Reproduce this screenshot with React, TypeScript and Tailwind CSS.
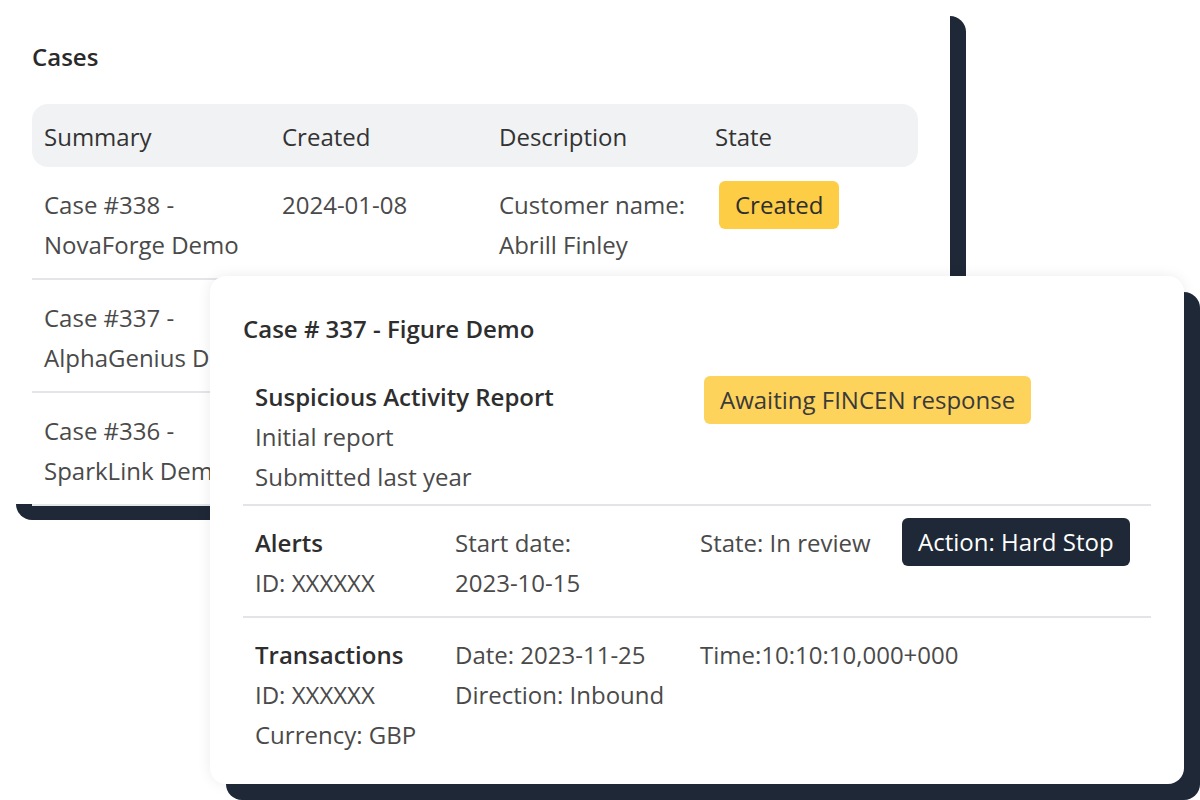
import React from "react";

const font = { fontFamily: '"Open Sans", "Noto Sans", sans-serif' };

function CasesCard() {
  const rows = [
    { s: ["Case #338 -", "NovaForge Demo"], c: "2024-01-08", d: ["Customer name:", "Abrill Finley"], badge: true },
    { s: ["Case #337 -", "AlphaGenius Demo"], c: "2024-01-07", d: ["Customer name:", "Jane Doe"], badge: false },
    { s: ["Case #336 -", "SparkLink Demo"], c: "2024-01-06", d: ["Customer name:", "John Smith"], badge: false },
  ];
  return (
    <div className="w-[950px] h-[504px] bg-white rounded-2xl shadow-[16px_16px_0_0_#1e2836] pl-8 pr-8 pt-[37px]">
      <div className="text-[24px] leading-10 font-semibold text-[#2a2a2a]">Cases</div>
      <div className="mt-[27px] w-[886px]">
        <div className="grid grid-cols-[238px_217px_216px_1fr] h-[63px] items-center bg-[#f1f2f4] rounded-2xl pl-[12px] pt-[2px] text-[24px] text-[#333]">
          <div>Summary</div>
          <div>Created</div>
          <div>Description</div>
          <div>State</div>
        </div>
        {rows.map((r, i) => (
          <div
            key={i}
            className="grid grid-cols-[238px_217px_216px_1fr] pl-[12px] pt-[18px] pb-[13px] border-b-2 border-[#e4e5e8] text-[24px] leading-10 text-[#4a4a4a]"
          >
            <div>
              <div>{r.s[0]}</div>
              <div className="whitespace-nowrap">{r.s[1]}</div>
            </div>
            <div>{r.c}</div>
            <div>
              <div>{r.d[0]}</div>
              <div>{r.d[1]}</div>
            </div>
            <div>
              {r.badge && (
                <div className="w-fit ml-1 -mt-[4px] h-12 px-4 py-1 rounded-md bg-[#fdcd45] text-[#2e2e2e]">Created</div>
              )}
            </div>
          </div>
        ))}
      </div>
    </div>
  );
}

function DetailCard() {
  return (
    <div className="absolute left-[210px] top-[276px] w-[974px] h-[508px] bg-white rounded-2xl shadow-[16px_16px_0_0_#1e2836,0_0_14px_rgba(0,0,0,0.08)] px-[33px] pt-[33px]">
      <div className="text-[24px] leading-10 font-semibold text-[#2e2e2e]">Case # 337 - Figure Demo</div>
      <div className="mt-[28px] grid grid-cols-[200px_245px_202px_1fr] pl-[12px] pb-[7px] border-b-2 border-[#e2e4e8] text-[24px] leading-10 text-[#4a4a4a]">
        <div className="col-span-2">
          <div className="font-semibold text-[#2e2e2e]">Suspicious Activity Report</div>
          <div>Initial report</div>
          <div>Submitted last year</div>
        </div>
        <div className="col-span-2">
          <div className="w-fit ml-1 -mt-[1px] h-12 px-4 py-1 rounded-md bg-[#fed35c] text-[#3a3a3a] whitespace-nowrap">Awaiting FINCEN response</div>
        </div>
      </div>
      <div className="grid grid-cols-[200px_245px_202px_1fr] pl-[12px] pt-[17px] pb-[13px] border-b-2 border-[#e2e4e8] text-[24px] leading-10 text-[#4a4a4a]">
        <div>
          <div className="font-semibold text-[#2e2e2e]">Alerts</div>
          <div>ID: XXXXXX</div>
        </div>
        <div>
          <div>Start date:</div>
          <div>2023-10-15</div>
        </div>
        <div className="whitespace-nowrap">State: In review</div>
        <div>
          <div className="w-fit -mt-[5px] h-12 px-4 py-1 rounded-md bg-[#1e2836] text-white whitespace-nowrap">Action: Hard Stop</div>
        </div>
      </div>
      <div className="grid grid-cols-[200px_245px_1fr] pl-[12px] pt-[17px] text-[24px] leading-10 text-[#4a4a4a]">
        <div>
          <div className="font-semibold text-[#2e2e2e]">Transactions</div>
          <div>ID: XXXXXX</div>
          <div>Currency: GBP</div>
        </div>
        <div>
          <div className="whitespace-nowrap">Date: 2023-11-25</div>
          <div className="whitespace-nowrap">Direction: Inbound</div>
        </div>
        <div className="whitespace-nowrap">Time:10:10:10,000+000</div>
      </div>
    </div>
  );
}

export default function App() {
  return (
    <div style={font} className="relative w-[1200px] h-[800px] overflow-hidden bg-white">
      <CasesCard />
      <DetailCard />
    </div>
  );
}
